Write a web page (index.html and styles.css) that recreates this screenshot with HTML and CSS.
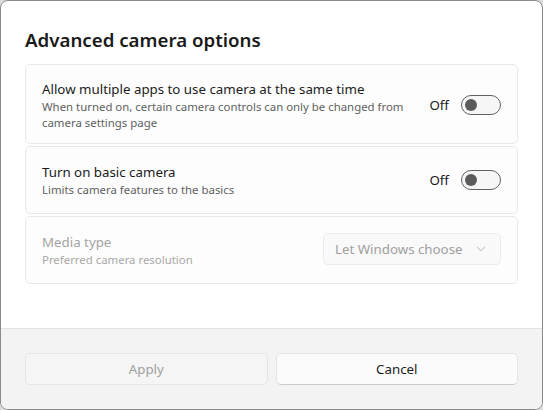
FILE: index.html
```html
<!DOCTYPE html>
<html lang="en">
<head>
<meta charset="utf-8">
<title>Advanced camera options</title>
<link rel="stylesheet" href="styles.css">
</head>
<body>
<div class="dialog">
  <div class="content">
    <h1 class="title">Advanced camera options</h1>
    <div class="cards">
      <div class="card card-tall">
        <div class="text">
          <div class="label">Allow multiple apps to use camera at the same time</div>
          <div class="desc">When turned on, certain camera controls can only be changed from camera settings page</div>
        </div>
        <div class="control">
          <span class="state">Off</span>
          <span class="toggle"><span class="knob"></span></span>
        </div>
      </div>
      <div class="card">
        <div class="text">
          <div class="label">Turn on basic camera</div>
          <div class="desc">Limits camera features to the basics</div>
        </div>
        <div class="control">
          <span class="state">Off</span>
          <span class="toggle"><span class="knob"></span></span>
        </div>
      </div>
      <div class="card disabled">
        <div class="text">
          <div class="label">Media type</div>
          <div class="desc">Preferred camera resolution</div>
        </div>
        <div class="combo">
          <span class="combo-text">Let Windows choose</span>
          <svg class="chevron" width="10" height="6" viewBox="0 0 10 6"><path d="M1 0.8 L5 4.8 L9 0.8" fill="none" stroke="#b3b3b3" stroke-width="1"/></svg>
        </div>
      </div>
    </div>
  </div>
  <div class="footer">
    <button class="btn btn-disabled">Apply</button>
    <button class="btn">Cancel</button>
  </div>
</div>
</body>
</html>
```
FILE: styles.css
```css
html, body {
  margin: 0;
  padding: 0;
  background: #dcdcdc;
}
body {
  font-family: "Noto Sans", "Open Sans", sans-serif;
  color: #1b1b1b;
}
.dialog {
  width: 543px;
  height: 410px;
  box-sizing: border-box;
  border: 1px solid #8a8a8a;
  border-radius: 8px;
  overflow: hidden;
  display: flex;
  flex-direction: column;
  background: #ffffff;
}
.content {
  flex: 1;
  padding: 25px 24px 0 24px;
}
.title {
  margin: 0 0 10px 0;
  font-size: 18.7px;
  line-height: 28px;
  font-weight: 600;
  color: #1a1a1a;
}
.cards {
  display: flex;
  flex-direction: column;
  gap: 2px;
}
.card {
  box-sizing: border-box;
  min-height: 68px;
  border: 1px solid #e8e8e8;
  border-radius: 5px;
  background: #fdfdfd;
  padding: 13px 16px;
  display: flex;
  align-items: center;
  justify-content: space-between;
}
.card-tall {
  min-height: 80px;
  padding: 14px 16px 12px 16px;
}
.text {
  max-width: 372px;
}
.label {
  font-size: 13.3px;
  line-height: 20px;
}
.desc {
  font-size: 11.4px;
  line-height: 16px;
  color: #5f5f5f;
}
.control {
  display: flex;
  align-items: center;
}
.state {
  font-size: 13.3px;
  line-height: 20px;
  margin-right: 12px;
}
.toggle {
  box-sizing: border-box;
  width: 40px;
  height: 20px;
  border: 1px solid #616161;
  border-radius: 10px;
  background: #f6f6f6;
  display: flex;
  align-items: center;
  padding-left: 3px;
}
.knob {
  width: 12px;
  height: 12px;
  border-radius: 50%;
  background: #5b5b5b;
}
.disabled .label {
  color: #a3a3a3;
}
.disabled .desc {
  color: #a8a8a8;
}
.combo {
  box-sizing: border-box;
  width: 178px;
  height: 32px;
  border: 1px solid #ececec;
  border-radius: 5px;
  background: #f9f9f9;
  display: flex;
  align-items: center;
  justify-content: space-between;
  padding: 0 14px 0 11px;
  margin-top: -2px;
}
.combo-text {
  font-size: 13.3px;
  color: #a0a0a0;
}
.footer {
  background: #f3f3f3;
  border-top: 1px solid #e3e3e3;
  padding: 24px 24px 24px 24px;
  display: flex;
  gap: 8px;
}
.btn {
  flex: 1;
  box-sizing: border-box;
  height: 32px;
  font-family: "Noto Sans", "Open Sans", sans-serif;
  font-size: 13.3px;
  border: 1px solid #e5e5e5;
  border-bottom-color: #cccccc;
  border-radius: 5px;
  background: #fbfbfb;
  color: #1b1b1b;
  padding: 0;
}
.btn-disabled {
  background: #f5f5f5;
  border-color: #e5e5e5;
  color: #a0a0a0;
}
```
